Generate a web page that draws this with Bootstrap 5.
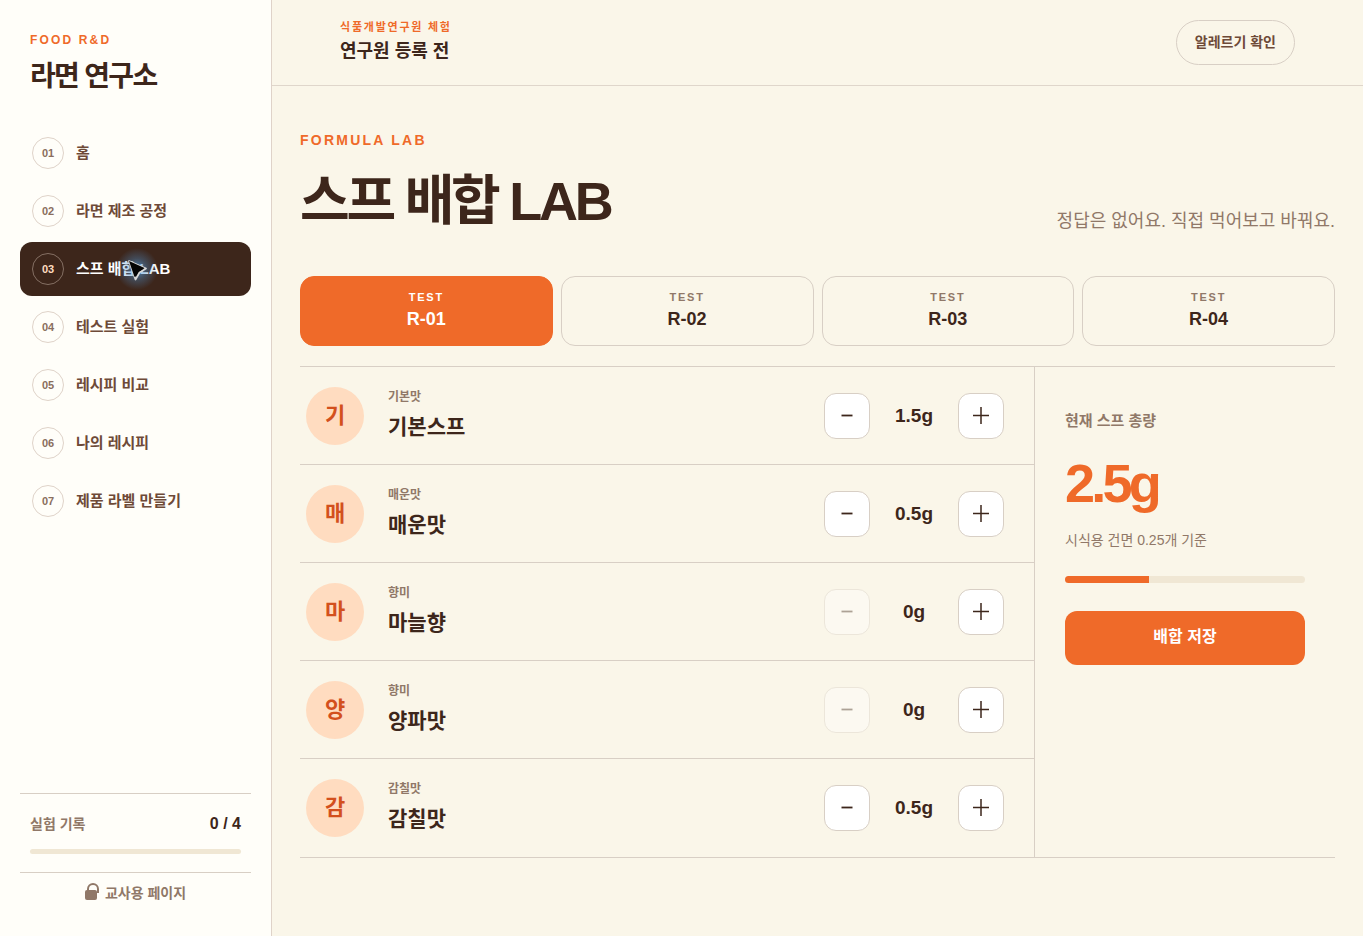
<!DOCTYPE html>
<html lang="ko">
<head>
<meta charset="utf-8">
<meta name="viewport" content="width=device-width, initial-scale=1">
<title>라면 연구소 - 스프 배합 LAB</title>
<link href="https://cdn.jsdelivr.net/npm/bootstrap@5.3.0/dist/css/bootstrap.min.css" rel="stylesheet">
<style>
  :root {
    --ink: #3d261b;
    --brown: #6e4a38;
    --muted: #907868;
    --orange: #ef6a29;
    --rule: #d8cfc5;
    --track: #f0e7d4;
  }
  body {
    font-family: "Liberation Sans", "Noto Sans CJK KR", sans-serif;
    background: #faf6e9;
    color: var(--ink);
    line-height: 24px;
  }
  a { text-decoration: none; }
  .sidebar { width: 272px; background: #fffef9; border-right: 1px solid #dfd3c9; padding: 30px 20px 31px; }
  .brand { padding: 0 10px; }
  .eyebrow { color: var(--orange); font-weight: 700; font-size: 12px; line-height: 20px; letter-spacing: .18em; }
  .brand-name { font-size: 28px; line-height: 36px; letter-spacing: -.06em; font-weight: 700; margin: 9px 0 31px; }
  .side-nav { gap: 4px; }
  .side-nav .nav-link { height: 54px; border-radius: 12px; padding: 0 12px; gap: 12px; color: var(--brown); font-weight: 700; font-size: 15px; }
  .side-nav .nav-link.active { background: var(--ink); color: #fff; }
  .step-no { width: 32px; height: 32px; border: 1px solid #dfd3c9; border-radius: 50%; font-size: 11px; color: #8a6e5e; flex: none; }
  .active .step-no { border-color: #846f63; color: #ffdcc0; }
  .pointer { left: 96px; top: 6px; width: 44px; height: 44px; pointer-events: none; }
  .record { border-top: 1px solid var(--rule); border-bottom: 1px solid var(--rule); padding: 18px 10px; }
  .record-row { margin-bottom: 13px; }
  .bar { background: var(--track); border-radius: 4px; height: 5px; }
  .bar-total { height: 7px; }
  .bar .progress-bar { background: var(--orange); }
  .muted-text { color: var(--muted); }
  .small-bold { font-size: 14px; font-weight: 700; color: var(--muted); }
  .teacher-link { gap: 6px; padding-top: 8px; }
  .topbar { height: 86px; padding: 0 68px; border-bottom: 1px solid #dfd6cb; }
  .topbar .eyebrow { font-size: 11px; line-height: 16px; letter-spacing: .16em; }
  .researcher { font-size: 18px; line-height: 32px; font-weight: 700; }
  .pill { height: 45px; padding: 0 18px; border: 1px solid var(--rule); border-radius: 23px; font-size: 14px; font-weight: 700; color: var(--brown); }
  .page { padding: 44px 28px; }
  .heading { margin-bottom: 40px; }
  .heading .eyebrow { font-size: 14px; letter-spacing: .16em; }
  .page-title { font-size: 54px; line-height: 70px; letter-spacing: -.06em; font-weight: 700; margin: 16px 0 0; }
  .intro { font-size: 18px; line-height: 30px; }
  .test-tab { height: 70px; border: 1px solid var(--rule); border-radius: 14px; background: none; color: var(--ink); font-size: 18px; font-weight: 700; line-height: 24px; padding: 0 0 4px; }
  .test-tab span { font-size: 11px; line-height: 20px; letter-spacing: .16em; color: var(--muted); }
  .test-tab.selected { background: var(--orange); border-color: var(--orange); color: #fff; }
  .test-tab.selected span { color: #fff; }
  .lab { border-top: 1px solid var(--rule); border-bottom: 1px solid var(--rule); margin-top: 20px; }
  .ingredient { height: 98px; border-bottom: 1px solid var(--rule); padding: 0 30px 0 6px; }
  .ingredient:last-child { border-bottom: 0; }
  .token { width: 58px; height: 58px; border-radius: 50%; background: #ffdcc0; color: #d3501d; font-size: 22px; font-weight: 700; margin-right: 24px; }
  .flavour { padding-bottom: 2px; }
  .kind { font-size: 12px; line-height: 20px; font-weight: 700; color: var(--muted); }
  .ingredient h2 { font-size: 21px; line-height: 32px; font-weight: 700; margin: 4px 0 0; }
  .step-btn { width: 46px; height: 46px; border: 1px solid var(--rule); border-radius: 12px; background: #fff; color: var(--ink); padding: 0 0 2px; }
  .step-btn:disabled { opacity: .4; }
  .amount { width: 88px; text-align: center; font-size: 19px; font-weight: 700; }
  .summary { width: 301px; border-left: 1px solid var(--rule); padding: 42px 30px; }
  .summary-label { font-size: 15px; font-weight: 700; }
  .total { font-size: 54px; line-height: 64px; letter-spacing: -.07em; font-weight: 700; color: var(--orange); margin: 18px 0 13px; }
  .basis { font-size: 14px; }
  .save { height: 54px; border-radius: 12px; background: var(--orange); color: #fff; font-size: 16px; font-weight: 700; margin-top: 28px; padding: 0 0 2px; }
</style>
</head>
<body>
<div class="d-flex min-vh-100">
  <aside class="sidebar d-flex flex-column flex-shrink-0">
    <div class="brand">
      <div class="eyebrow">FOOD R&amp;D</div>
      <div class="brand-name">라면 연구소</div>
    </div>
    <nav class="side-nav nav flex-column flex-nowrap" aria-label="메뉴">
      <a class="nav-link d-flex align-items-center" href="#"><span class="step-no d-flex align-items-center justify-content-center">01</span>홈</a>
      <a class="nav-link d-flex align-items-center" href="#"><span class="step-no d-flex align-items-center justify-content-center">02</span>라면 제조 공정</a>
      <a class="nav-link active d-flex align-items-center position-relative" href="#" aria-current="page"><span class="step-no d-flex align-items-center justify-content-center">03</span>스프 배합 LAB
        <svg class="pointer position-absolute" viewBox="0 0 44 44" aria-hidden="true">
          <defs><radialGradient id="glow"><stop offset="0" stop-color="#5aa9ee" stop-opacity=".8"/><stop offset=".5" stop-color="#4d8fca" stop-opacity=".35"/><stop offset="1" stop-color="#4d8fca" stop-opacity="0"/></radialGradient></defs>
          <circle cx="21" cy="21" r="21" fill="url(#glow)"/>
          <path d="M13 13 30 20.500 23.500 24.500 19.500 31.500Z" fill="#050505" stroke="#d8d8d8" stroke-width="1.800" stroke-linejoin="round"/>
          <path d="M13 13 28.500 20 22.500 23.500 18.500 29Z" fill="#050505"/>
        </svg></a>
      <a class="nav-link d-flex align-items-center" href="#"><span class="step-no d-flex align-items-center justify-content-center">04</span>테스트 실험</a>
      <a class="nav-link d-flex align-items-center" href="#"><span class="step-no d-flex align-items-center justify-content-center">05</span>레시피 비교</a>
      <a class="nav-link d-flex align-items-center" href="#"><span class="step-no d-flex align-items-center justify-content-center">06</span>나의 레시피</a>
      <a class="nav-link d-flex align-items-center" href="#"><span class="step-no d-flex align-items-center justify-content-center">07</span>제품 라벨 만들기</a>
    </nav>
    <div class="mt-auto">
      <div class="record">
        <div class="record-row d-flex justify-content-between">
          <span class="small-bold">실험 기록</span><strong>0 / 4</strong>
        </div>
        <div class="progress bar" role="progressbar" aria-label="실험 기록" aria-valuenow="0" aria-valuemin="0" aria-valuemax="4"></div>
      </div>
      <a class="teacher-link small-bold d-flex align-items-center justify-content-center" href="#">
        <svg class="mb-1" width="14" height="17" viewBox="0 0 14 17" aria-hidden="true"><path d="M3 8V6a5 5 0 0 1 10 0v4" fill="none" stroke="currentColor" stroke-width="2"/><rect y="7" width="12" height="10" rx="2" fill="currentColor"/></svg>교사용 페이지</a>
    </div>
  </aside>

  <div class="flex-grow-1">
    <header class="topbar d-flex align-items-center justify-content-between">
      <div>
        <div class="eyebrow">식품개발연구원 체험</div>
        <div class="researcher">연구원 등록 전</div>
      </div>
      <button class="pill btn" type="button">알레르기 확인</button>
    </header>

    <main class="page">
      <div class="heading d-flex justify-content-between align-items-end">
        <div>
          <div class="eyebrow">FORMULA LAB</div>
          <h1 class="page-title">스프 배합 LAB</h1>
        </div>
        <p class="intro muted-text mb-0">정답은 없어요. 직접 먹어보고 바꿔요.</p>
      </div>

      <div class="row row-cols-4 gx-2">
        <div class="col"><button class="test-tab selected w-100" type="button"><span class="d-block">TEST</span>R-01</button></div>
        <div class="col"><button class="test-tab w-100" type="button"><span class="d-block">TEST</span>R-02</button></div>
        <div class="col"><button class="test-tab w-100" type="button"><span class="d-block">TEST</span>R-03</button></div>
        <div class="col"><button class="test-tab w-100" type="button"><span class="d-block">TEST</span>R-04</button></div>
      </div>

      <div class="lab d-flex">
        <div class="flex-grow-1" id="ingredients"></div>
        <section class="summary flex-shrink-0">
          <div class="summary-label muted-text">현재 스프 총량</div>
          <div class="total">2.5g</div>
          <div class="basis muted-text">시식용 건면 0.25개 기준</div>
          <div class="progress bar bar-total mt-4" role="progressbar" aria-label="현재 스프 총량" aria-valuenow="35" aria-valuemin="0" aria-valuemax="100"><div class="progress-bar" style="width:35%"></div></div>
          <button class="save btn w-100" type="button">배합 저장</button>
        </section>
      </div>
    </main>
  </div>
</div>
<script src="https://cdn.jsdelivr.net/npm/bootstrap@5.3.0/dist/js/bootstrap.bundle.min.js"></script>
<script>
  const items = [
    ["기본맛", "기본스프", 1.5],
    ["매운맛", "매운맛", 0.5],
    ["향미", "마늘향", 0],
    ["향미", "양파맛", 0],
    ["감칠맛", "감칠맛", 0.5]
  ];
  document.getElementById("ingredients").innerHTML = items.map(([kind, name, grams]) => `
    <div class="ingredient d-flex align-items-center">
      <div class="token d-flex align-items-center justify-content-center">${name[0]}</div>
      <div class="flavour flex-grow-1"><div class="kind">${kind}</div><h2>${name}</h2></div>
      <button class="step-btn d-flex align-items-center justify-content-center" type="button" aria-label="${name} 줄이기" ${grams ? "" : "disabled"}>
        <svg width="18" height="18" viewBox="0 0 18 18"><path d="M3.500 9.500h11" stroke="currentColor" stroke-width="1.800"/></svg></button>
      <div class="amount">${grams}g</div>
      <button class="step-btn d-flex align-items-center justify-content-center" type="button" aria-label="${name} 늘리기">
        <svg width="18" height="18" viewBox="0 0 18 18"><path d="M1 9.500h16M9 1v17" stroke="currentColor" stroke-width="1.500"/></svg></button>
    </div>`).join("");
</script>
</body>
</html>
